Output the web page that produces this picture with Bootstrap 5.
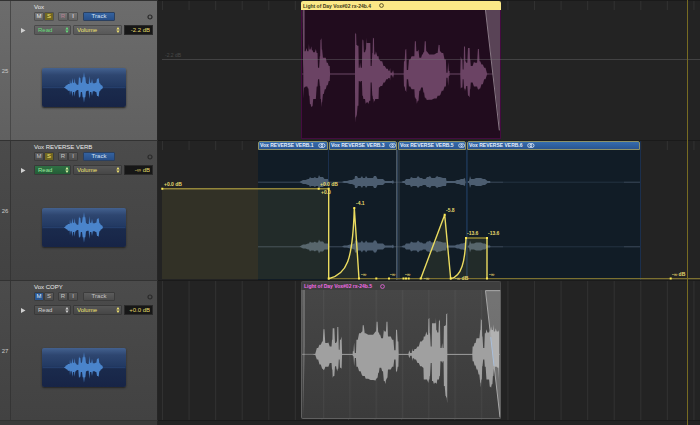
<!DOCTYPE html>
<html lang="en">
<head>
<meta charset="utf-8">
<meta name="viewport" content="width=device-width, initial-scale=1">
<title>Tracks</title>
<link href="https://cdn.jsdelivr.net/npm/bootstrap@5.3.0/dist/css/bootstrap.min.css" rel="stylesheet">
<style>
body{background:#222;font-family:"Liberation Sans",Arial,sans-serif;font-size:6px;line-height:8px;color:#d4d4d4}
.track{min-height:140px}
.strip{width:158px;background:linear-gradient(#4b4b4b,#424242);border-right:1px solid #262626;border-top:1px solid #323232}
.strip.selected{background:linear-gradient(#6c6c6c,#606060)}
.num{width:11px;border-right:1px solid #353535;font-size:6px;color:#c9c9c9}
.selected .num{border-color:#484848}
.ctl{padding:2px 4px 0 0}
.tname{font-size:6px;line-height:8px;color:#ececec;padding-left:23px}
.line-a{height:9px;padding-left:23px;margin-top:1px}
.line-b{height:10px;padding-left:10px;margin-top:4px}
.key{height:9px;width:10px;padding:0;border:1px solid #3c3c3c;border-radius:1px;font-size:6px;line-height:7px;color:#c4c4c4;background:linear-gradient(#5c5c5c,#4c4c4c)}
.selected .key{background:linear-gradient(#777,#626262);border-color:#505050;color:#e8e8e8}
.key.solo,.selected .key.solo{background:#716722;color:#f4e77c}
.key.mute{background:#2b568f;color:#dfecff}
.selected .key.rec{color:#b77f93}
.key.wide{width:32px;margin-left:5px}
.key.on,.selected .key.on{background:linear-gradient(#34629f,#284f88);color:#d5e2f5;border-color:#2b405f}
.pick{height:10px}
.pick select{appearance:none;height:10px;width:100%;border:1px solid #393939;border-radius:1px;padding:0 3px;font-size:6px;line-height:8px;color:#cfcfcf;background:linear-gradient(#565656,#464646)}
.selected .pick select{background:linear-gradient(#666,#585858);border-color:#4a4a4a}
.pick svg{position:absolute;right:2px;top:2px;pointer-events:none;fill:currentColor}
.mode{width:37px;color:#d0d0d0}
.parm{width:49px;color:#f0e270}
.pick.parm select{color:#f0e270}
.selected .mode,.selected .pick.mode select{color:#65dd7a}
.pick.reading{color:#d8f5a0}
.pick.reading select{background:linear-gradient(#2f7044,#235d36);color:#9be59e}
.level{width:29px;height:10px;border:1px solid #2a2a2a;background:#171717;color:#e6da6b;font-size:6px;line-height:8px;padding:0 2px;text-align:right}
.fold{width:5px;height:7px;margin-right:8px;color:#cfcfcf;line-height:0}
.thumb{width:84px;height:39px;border-radius:2px;margin:33px 0 0 31px;background:linear-gradient(#43618f,#2e4670 18%,#233a63 45%,#1a2a4c 55%,#172446);box-shadow:0 1px 2px #222;overflow:hidden}
.lane{background:#232323;border-top:1px solid #1a1a1a;overflow:hidden;min-width:0}
.sheet{position:absolute;inset:0;width:100%;height:100%;pointer-events:none}
.clip{position:relative;min-width:0}
.clip svg{display:block}
.cap{height:9px;font-size:5px;line-height:8px;font-weight:700;white-space:nowrap;padding-left:2px;border-radius:2px 2px 0 0}
.verse{padding-left:100px}
.verse .clip{background:#111c26;border-right:1px solid #1b2f4d}
.verse .cap{background:linear-gradient(#346cae,#2a5590);border:1px solid #8d9268;color:#e6effb;line-height:7px;padding-left:1px}
.v1{width:71px}.v3{width:69px}.v5{width:69px}.v6{width:174px}
.solo-lane{padding:0 0 1px 143px}
.vox{width:200px}
.vox .cap{background:#fbe887;color:#3d3817}
.vox .body{background:#210c1e;border:1px solid #450b40;border-top:0}
.vox.copy .cap{color:#f06ae4;background:#3e3e3e;border:1px solid #494949;border-bottom:0}
.vox.copy .body{background:linear-gradient(#464646,#3b3b3b);border:1px solid #606060;border-top:0;border-radius:0 0 2px 2px}
.ghost{font-size:5px;fill:#4a4a4a}
.pts text{font-size:5px;font-weight:700;fill:#e6d96d}
.foot{min-height:5px}
.foot .strip{background:#3a3a3a}
.playhead{position:absolute;top:0;bottom:0;left:687px;width:1px;background:#776b22;pointer-events:none}
</style>
<script src="https://cdn.jsdelivr.net/npm/bootstrap@5.3.0/dist/js/bootstrap.bundle.min.js"></script>
</head>
<body>
<svg width="0" height="0" class="position-absolute" aria-hidden="true">
 <defs>
  <symbol id="arrows" viewBox="0 0 4 6"><path d="M2 0 3.6 2.4H.4zM2 6 .4 3.6h3.2z"/></symbol>
  <symbol id="stereo" viewBox="0 0 8 5"><g fill="none" stroke="currentColor" stroke-width=".8"><circle cx="2.7" cy="2.5" r="2"/><circle cx="5" cy="2.5" r="2"/></g></symbol>
  <symbol id="mono" viewBox="0 0 5 5"><circle cx="2.5" cy="2.5" r="1.9" fill="none" stroke="currentColor" stroke-width=".8"/></symbol>
  <symbol id="wave" viewBox="126 204 252 117"><path d="M128 262H376" stroke="#2b4a7c" stroke-width="2"/><path data-wave="thumb" fill="#4a84cb"/></symbol>
  <symbol id="fold" viewBox="0 0 5 7"><path d="M0 1 4.5 3.5 0 6z" fill="currentColor"/></symbol>
  <symbol id="dial" viewBox="0 0 6 6"><circle cx="3" cy="3" r="2" fill="none" stroke="#2a2a2a" stroke-width="1.2"/></symbol>
  <pattern id="grid" x="4" width="26.57" height="150" patternUnits="userSpaceOnUse"><path d="M.5 0V150" stroke="#313131"/></pattern>
  <pattern id="gridclip" x="16" width="79.7" height="450" patternUnits="userSpaceOnUse"><path d="M2 0V450" stroke="#fff" stroke-opacity=".05" stroke-width="3"/></pattern>
 </defs>
</svg>

<main class="position-relative d-flex flex-column min-vh-100">
 <section class="track d-flex" aria-label="Vox">
  <div class="strip selected d-flex flex-shrink-0">
   <div class="num d-flex align-items-center justify-content-center flex-shrink-0">25</div>
   <div class="ctl flex-grow-1">
    <div class="tname">Vox</div>
    <div class="line-a d-flex align-items-center">
     <button class="key">M</button><button class="key solo">S</button><button class="key rec ms-1">R</button><button class="key">I</button><button class="key wide on">Track</button>
     <svg class="ms-auto" width="6" height="6"><use href="#dial"/></svg>
    </div>
    <div class="line-b d-flex align-items-center">
     <button class="fold btn p-0 border-0" aria-label="Show automation"><svg width="5" height="7"><use href="#fold"/></svg></button>
     <div class="pick mode position-relative"><select aria-label="Automation mode"><option>Read</option></select><svg width="4" height="6"><use href="#arrows"/></svg></div>
     <div class="pick parm position-relative mx-auto"><select aria-label="Parameter"><option>Volume</option></select><svg width="4" height="6"><use href="#arrows"/></svg></div>
     <input class="level" aria-label="Level" value="-2.2 dB">
    </div>
    <div class="thumb"><svg width="84" height="39"><use href="#wave"/></svg></div>
   </div>
  </div>
  <div class="lane solo-lane flex-grow-1 position-relative d-flex">
   <svg class="sheet"><rect width="100%" height="9" fill="url(#grid)"/></svg>
   <div class="clip vox d-flex flex-column">
    <div class="cap d-flex align-items-center">Light of Day Vox#02 rx-24b.4<svg class="ms-2" width="5" height="5"><use href="#mono"/></svg></div>
    <div class="body flex-grow-1"><svg width="100%" height="128" viewBox="32 30 600 388" preserveAspectRatio="none">
     <path d="M32 224H632" stroke="#553a51" stroke-width="3"/><path data-wave="vox" fill="#6b4364"/>
     <path d="M34 30 40 30V150L36 224z" fill="#6b4d66"/>
     <path d="M588 30H632V395z" fill="#594356"/><path d="M588 30 630 395" stroke="#8b7a88" stroke-width="3"/>
    </svg></div>
   </div>
   <svg class="sheet"><line x1="4" x2="100%" y1="58.5" y2="58.5" stroke="#77777a" stroke-opacity=".38"/><text class="ghost" x="7" y="56">-2.2 dB</text></svg>
  </div>
 </section>

 <section class="track d-flex" aria-label="Vox REVERSE VERB">
  <div class="strip d-flex flex-shrink-0">
   <div class="num d-flex align-items-center justify-content-center flex-shrink-0">26</div>
   <div class="ctl flex-grow-1">
    <div class="tname">Vox REVERSE VERB</div>
    <div class="line-a d-flex align-items-center">
     <button class="key">M</button><button class="key solo">S</button><button class="key rec ms-1">R</button><button class="key">I</button><button class="key wide on">Track</button>
     <svg class="ms-auto" width="6" height="6"><use href="#dial"/></svg>
    </div>
    <div class="line-b d-flex align-items-center">
     <button class="fold btn p-0 border-0" aria-label="Show automation"><svg width="5" height="7"><use href="#fold"/></svg></button>
     <div class="pick mode reading position-relative"><select aria-label="Automation mode"><option>Read</option></select><svg width="4" height="6"><use href="#arrows"/></svg></div>
     <div class="pick parm position-relative mx-auto"><select aria-label="Parameter"><option>Volume</option></select><svg width="4" height="6"><use href="#arrows"/></svg></div>
     <input class="level" aria-label="Level" value="-∞ dB">
    </div>
    <div class="thumb"><svg width="84" height="39"><use href="#wave"/></svg></div>
   </div>
  </div>
  <div class="lane verse flex-grow-1 position-relative d-flex">
   <svg class="sheet"><rect width="100%" height="9" fill="url(#grid)"/></svg>
   <div class="clip v1 flex-shrink-0"><div class="cap d-flex align-items-center">Vox REVERSE VERB.1<svg class="ms-1" width="8" height="5"><use href="#stereo"/></svg></div></div>
   <div class="clip v3 flex-shrink-0"><div class="cap d-flex align-items-center">Vox REVERSE VERB.3<svg class="ms-1" width="8" height="5"><use href="#stereo"/></svg></div></div>
   <div class="clip v5 flex-shrink-0"><div class="cap d-flex align-items-center">Vox REVERSE VERB.5<svg class="ms-1" width="8" height="5"><use href="#stereo"/></svg></div></div>
   <div class="clip v6 flex-shrink-0"><div class="cap d-flex align-items-center">Vox REVERSE VERB.6<svg class="ms-1" width="8" height="5"><use href="#stereo"/></svg></div></div>
   <svg class="sheet">
    <g transform="translate(-158 -141)">
     <g id="verb"><path d="M258 182.2H503" stroke="#3c4b5c"/><path d="M503 182.2H624" stroke="#243342"/><path d="M624 182.2H640" stroke="#3c4b5c"/><path data-wave="verb" fill="#4c5d70"/></g>
     <use href="#verb" y="64.6"/>
     <path d="M396.8 150V280" stroke="#66727b"/><path d="M399 150V280" stroke="#39454f"/>
     <path d="M467 150V280" stroke="#1d3450" stroke-width="1.5"/>
     <path d="M162 188.7H328.7V279H162zM328.7 278.7C346.7 274.7 352.7 261.3 354.3 208L359 278.7zM420.7 278.7 444.7 214.7 450.7 278.7C461.7 276.3 465 261.3 466 238H487V278.7z" fill="#d8cc50" fill-opacity=".09"/>
     <path d="M162.3 188.7H328.7" fill="none" stroke="#93863a" stroke-width="1.4"/>
     <path d="M328.7 278.7H2400" stroke="#7c7030" stroke-width="1.2"/>
     <path d="M466 238H487" stroke="#b09c38" stroke-width="1.2"/>
     <path d="M328.7 188.7V278.7C346.7 274.7 352.7 261.3 354.3 208L359 278.7M420.7 278.7 444.7 214.7 450.7 278.7C461.7 276.3 465 261.3 466 238M487 238V278.7" fill="none" stroke="#ebdc60" stroke-width="1.4"/>
     <path fill="#fdea55" d="M161.3 187.7h2v2h-2zM317.7 187.7h2v2h-2zM327.7 187.7h2v2h-2zM327.7 277.5h2v2h-2zM353.3 207h2v2h-2zM358 277.5h2v2h-2zM375.3 277.5h2v2h-2zM388 277.5h2v2h-2zM402.5 277.5h2v2h-2zM405 277.5h2v2h-2zM407.7 277.5h2v2h-2zM419.7 277.5h2v2h-2zM443.7 213.7h2v2h-2zM449.7 277.5h2v2h-2zM465 237h2v2h-2zM486 237h2v2h-2zM486 277.5h2v2h-2zM669.7 277.5h2v2h-2z"/>
     <g class="pts"><text x="164" y="186">+0.0 dB</text><text x="320" y="186">+0.0 dB</text><text x="321" y="194">+0.0</text><text x="356" y="205">-4.1</text><text x="446" y="212">-5.8</text><text x="467" y="235">-13.6</text><text x="488" y="235">-13.6</text><text x="361" y="276">-∞</text><text x="390" y="276">-∞</text><text x="405" y="276">-∞</text><text x="424" y="280">-∞</text><text x="455" y="280">-∞ dB</text><text x="489" y="276">-∞</text><text x="672" y="276">-∞ dB</text></g>
    </g>
   </svg>
  </div>
 </section>

 <section class="track d-flex" aria-label="Vox COPY">
  <div class="strip d-flex flex-shrink-0">
   <div class="num d-flex align-items-center justify-content-center flex-shrink-0">27</div>
   <div class="ctl flex-grow-1">
    <div class="tname">Vox COPY</div>
    <div class="line-a d-flex align-items-center">
     <button class="key mute">M</button><button class="key">S</button><button class="key rec ms-1">R</button><button class="key">I</button><button class="key wide">Track</button>
     <svg class="ms-auto" width="6" height="6"><use href="#dial"/></svg>
    </div>
    <div class="line-b d-flex align-items-center">
     <button class="fold btn p-0 border-0" aria-label="Show automation"><svg width="5" height="7"><use href="#fold"/></svg></button>
     <div class="pick mode position-relative"><select aria-label="Automation mode"><option>Read</option></select><svg width="4" height="6"><use href="#arrows"/></svg></div>
     <div class="pick parm position-relative mx-auto"><select aria-label="Parameter"><option>Volume</option></select><svg width="4" height="6"><use href="#arrows"/></svg></div>
     <input class="level" aria-label="Level" value="+0.0 dB">
    </div>
    <div class="thumb"><svg width="84" height="39"><use href="#wave"/></svg></div>
   </div>
  </div>
  <div class="lane solo-lane flex-grow-1 position-relative d-flex">
   <svg class="sheet"><rect width="100%" height="100%" fill="url(#grid)"/></svg>
   <div class="clip vox copy d-flex flex-column">
    <div class="cap d-flex align-items-center">Light of Day Vox#02 rx-24b.5<svg class="ms-2" width="5" height="5"><use href="#mono"/></svg></div>
    <div class="body flex-grow-1"><svg width="100%" height="128" viewBox="32 29 600 388" preserveAspectRatio="none">
     <rect x="32" y="29" width="600" height="388" fill="url(#gridclip)"/>
     <path d="M32 224H632" stroke="#7c7c7c" stroke-width="3"/>
     <path data-wave="vox" fill="#a0a0a0" transform="matrix(-1 0 0 1 665 0)"/>
     <path d="M33 29H41V200L35 417z" fill="#fff" fill-opacity=".2"/>
     <path d="M588 29H632V415z" fill="#ddd" fill-opacity=".3"/><path d="M588 31 632 415M588 31H632" fill="none" stroke="#a9a9a9" stroke-width="3"/>
     <path d="M604 172 614 259" stroke="#a9bfdc" stroke-width="3"/>
    </svg></div>
   </div>
  </div>
 </section>

 <div class="foot d-flex flex-grow-1"><div class="strip flex-shrink-0"></div><div class="lane flex-grow-1"></div></div>
 <div class="playhead"></div>
</main>
<script>
// Envelope points: x, top, bottom
const vox = "36 150 300,40 155 265,46 145 262,50 155 268,53 133 290,56 150 315,60 140 325,64 152 322,68 158 300,74 148 300,79 160 262,82 205 240,86 170 260,88 120 300,91 115 325,93 150 310,98 175 285,104 175 270,110 190 258,116 200 245,118 223 225,192 223 225,193 98 372,196 102 355,198 136 350,203 138 320,205 205 245,208 190 250,212 205 245,215 118 290,218 122 300,221 158 300,225 150 315,227 113 312,229 130 310,233 130 315,239 130 305,241 200 250,245 160 290,247 113 300,250 116 312,252 165 306,256 155 300,264 170 300,266 180 265,275 185 260,283 200 250,292 208 240,296 214 236,299 206 244,302 220 228,308 212 236,313 223 225,339 223 225,341 185 262,345 150 275,348 148 279,351 212 240,356 180 262,364 170 270,371 170 270,374 125 295,377 125 300,380 155 314,385 150 305,390 175 275,396 165 265,400 158 280,404 125 295,407 125 298,410 155 303,425 165 302,440 160 298,446 135 290,449 136 290,451 155 288,460 160 275,468 180 262,471 220 235,475 188 260,479 215 230,480 223 225,510 223 225,513 170 268,518 180 265,520 210 240,523 141 268,526 141 276,528 185 270,531 190 260,535 145 290,540 145 295,542 180 270,545 200 250,553 188 262,560 190 262,565 148 270,568 148 272,572 185 268,580 195 255,588 205 240,598 223 225";
// Symmetric points: x, half height
const thumb = "192 1,198 6,204 10,208 10,210 24,213 12,217 28,221 14,224 28,228 12,233 8,237 33,241 28,244 14,248 30,252 46,256 30,260 12,264 10,268 34,272 14,276 26,281 12,287 14,291 26,296 28,300 12,306 6,312 0";
const verb = "296 0,303 2,308 3,310 5,312 4,315 5,317 4,319 7,321 5,323 5,326 3,328 3,329 0,340 0,344 1,350 2,354 3,355 6,357 6,359 4,362 6,364 4,366 6,369 4,372 4,374 6,376 6,379 3,383 3,387 1,391 1,393 2,395 0,400 0,403 1,406 3,409 3,411 5,415 4,418 6,422 4,424 3,427 5,430 6,433 4,437 6,440 5,446 4,447 1,453 1,457 2,461 3,465 4,466 0,468 1,470 6,472 3,476 4,481 4,485 3,490 1,491 0";
const mirror = (s, c) => s.split(",").map(p => { const [x, h] = p.split(" ").map(Number); return [x, c - h, c + h]; });
// A low point between neighbours keeps the peaks narrow
const sharpen = pts => pts.flatMap((p, i) => {
  const n = pts[i + 1];
  return n ? [p, [(p[0] + n[0]) / 2, Math.max(p[1], n[1]), Math.min(p[2], n[2])]] : [p];
});
const shapes = { vox: vox.split(",").map(p => p.split(" ").map(Number)), thumb: mirror(thumb, 262), verb: mirror(verb, 182) };
document.querySelectorAll("[data-wave]").forEach(el => {
  const pts = sharpen(shapes[el.dataset.wave]);
  el.setAttribute("d", "M" + pts.map(p => p[0] + " " + p[1]).join("L") + "L" + pts.slice().reverse().map(p => p[0] + " " + p[2]).join("L") + "Z");
});
</script>
</body>
</html>
